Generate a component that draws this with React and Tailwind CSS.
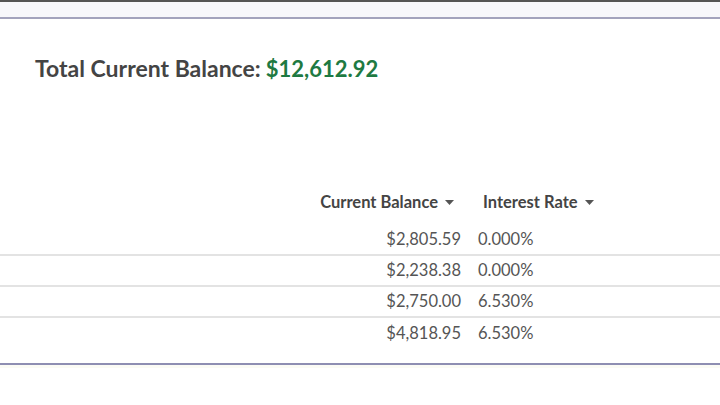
import React from "react";

const rows = [
  ["$2,805.59", "0.000%"],
  ["$2,238.38", "0.000%"],
  ["$2,750.00", "6.530%"],
  ["$4,818.95", "6.530%"],
];

function Caret() {
  return (
    <svg width="9" height="5" viewBox="0 0 9 5" className="ml-[7px] inline-block">
      <path d="M0 0 L9 0 L4.5 5 Z" fill="#555" />
    </svg>
  );
}

export default function App() {
  return (
    <div className="w-[720px] h-[405px] bg-white overflow-hidden" style={{ fontFamily: "Lato, 'Open Sans', sans-serif" }}>
      <div className="h-[2px] bg-[#555]" />
      <div className="h-[15px] bg-[#f7f7fb]" />
      <div className="h-[2px] bg-[#a3a3bd]" />
      <div className="pl-[35px] pt-[34px] flex items-baseline font-bold leading-[30px]">
        <span className="text-[23px] text-[#444]">Total Current Balance:</span>
        <span className="ml-[5px] text-[22px] text-[#1e7a42]">$12,612.92</span>
      </div>
      <div className="mt-[103px]">
        <div className="flex h-[30px] items-center text-[16.5px] font-bold text-[#444]">
          <div className="flex-1" />
          <div className="w-[160px] flex items-center justify-end pr-[16px]">
            Current Balance<Caret />
          </div>
          <div className="w-[140px] flex items-center pl-[13px]">
            Interest Rate<Caret />
          </div>
          <div className="w-[110px]" />
        </div>
        <div className="h-[8px]" />
        {rows.map((r, i) => (
          <div key={i} className={"flex h-[31px] items-center text-[16.5px] text-[#555] " + (i < rows.length - 1 ? "border-b-2 border-[#e3e3e3]" : "")}>
            <div className="flex-1" />
            <div className="w-[160px] text-right pr-[9px]">{r[0]}</div>
            <div className="w-[140px] pl-[8px]">{r[1]}</div>
            <div className="w-[110px]" />
          </div>
        ))}
        <div className="h-[14px]" />
        <div className="h-[2px] bg-[#8e8eb2]" />
        <div className="h-[3px] bg-[#fbfbf5]" />
      </div>
    </div>
  );
}
